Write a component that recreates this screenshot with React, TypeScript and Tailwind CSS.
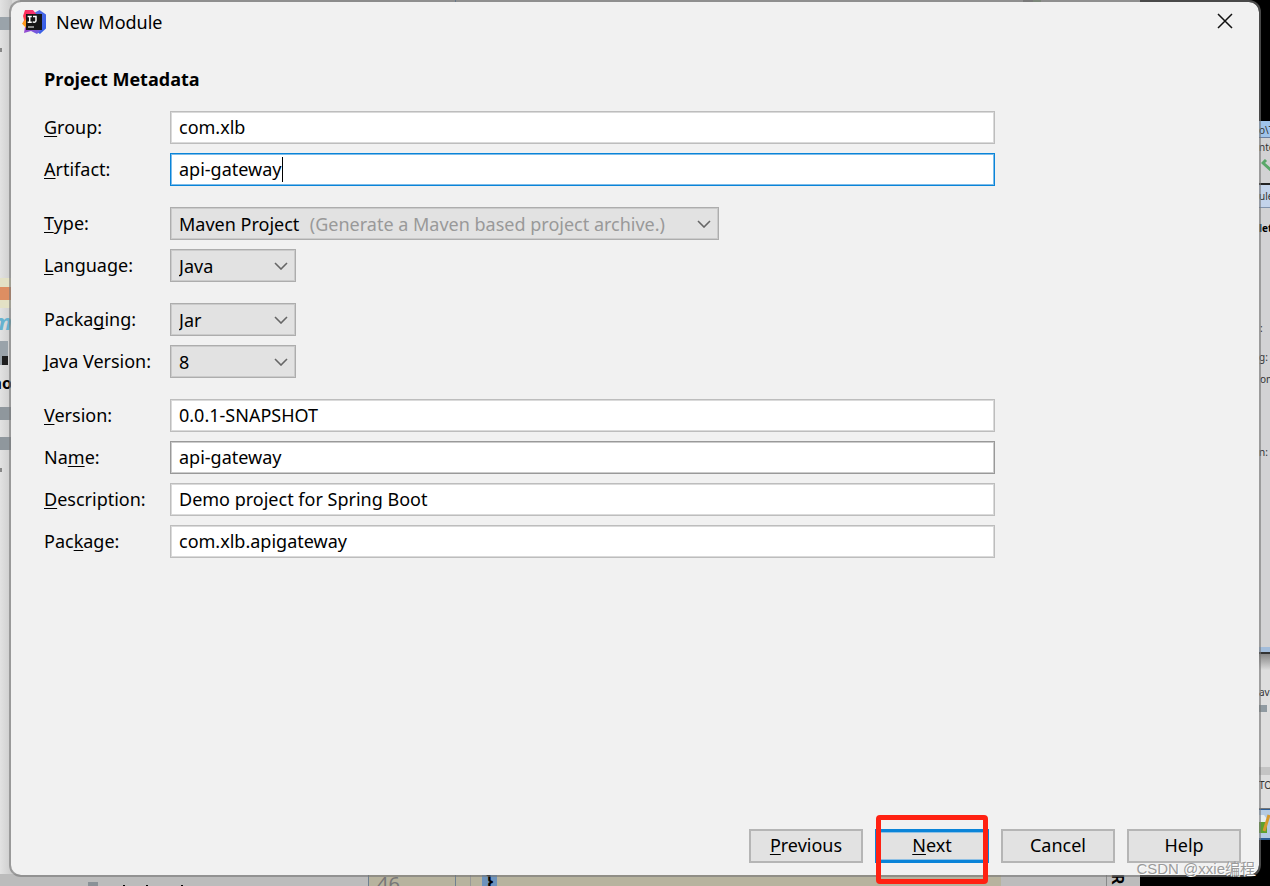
import { ReactNode } from 'react';

const FIELD =
  'block h-[33px] w-full border bg-white px-2 pb-0.5 text-lg text-black outline-none inset-ring';

interface RowProps {
  id: string;
  label: ReactNode;
  children: ReactNode;
}

function Row({ id, label, children }: RowProps) {
  return (
    <div className="flex items-center">
      <label htmlFor={id} className="w-[126px] shrink-0 whitespace-nowrap pb-0.5">
        {label}
      </label>
      {children}
    </div>
  );
}

function Key({ children }: { children: string }) {
  return (
    <span className="underline decoration-1 underline-offset-2 [text-decoration-skip-ink:none]">
      {children}
    </span>
  );
}

interface TextFieldProps {
  id: string;
  label: ReactNode;
  value: string;
  tone?: string;
}

function TextField({ id, label, value, tone = 'border-[#bdbdbd] inset-ring-[#dadada]' }: TextFieldProps) {
  return (
    <Row id={id} label={label}>
      <input id={id} type="text" defaultValue={value} className={`${FIELD} ${tone}`} />
    </Row>
  );
}

interface DropDownProps {
  id: string;
  label: ReactNode;
  options: string[];
  hint?: string;
}

function DropDown({ id, label, options, hint }: DropDownProps) {
  return (
    <Row id={id} label={label}>
      <div className={hint ? 'relative w-[549px]' : 'relative w-[126px]'}>
        <select
          id={id}
          className="block h-[33px] w-full appearance-none border border-[#adadad] bg-[#e2e2e2] px-2 text-lg text-black outline-none inset-ring inset-ring-[#cbcbcb]"
        >
          {options.map((o) => (
            <option key={o}>{o}</option>
          ))}
        </select>
        <span className="pointer-events-none absolute inset-0 flex items-center justify-end gap-8 whitespace-nowrap pr-2 text-[#999999]">
          {hint}
          <svg
            className="h-2 w-3.5"
            viewBox="0 0 14 8"
            fill="none"
            stroke="#666666"
            strokeWidth="1.6"
          >
            <path d="M1 1 7 7 13 1" />
          </svg>
        </span>
      </div>
    </Row>
  );
}

function IdeaLogo() {
  return (
    <svg className="size-6" viewBox="0 0 24 24" aria-hidden="true">
      <defs>
        <linearGradient id="blue" x1="0" y1="0" x2="1" y2="1">
          <stop offset="0" stopColor="#5b6fe0" />
          <stop offset="1" stopColor="#2f5be8" />
        </linearGradient>
        <linearGradient id="pink" x1="0" y1="1" x2="1" y2="0">
          <stop offset="0" stopColor="#ff8a1f" />
          <stop offset=".4" stopColor="#ff2d55" />
          <stop offset="1" stopColor="#f0347c" />
        </linearGradient>
        <linearGradient id="plum" x1="0" y1="0" x2="1" y2="1">
          <stop offset="0" stopColor="#c03ac0" />
          <stop offset="1" stopColor="#5a63e6" />
        </linearGradient>
      </defs>
      <path d="M12 3 17.5 0 24 4.5V18.5L18 24 12 20Z" fill="url(#blue)" />
      <path d="M3 17 2 23 9 21 15 24 20 19V12Z" fill="url(#plum)" />
      <path d="M3 0 11 0 15 5 9 13 4 17 1 13 2 10 1 6Z" fill="url(#pink)" />
      <path d="M0 13.5 4 9V18Z" fill="#ff9a1c" />
      <rect x="4" y="4" width="16" height="16" fill="#161616" />
      <path
        d="M5.6 6.6H9.8M7.7 6.6V12.2M5.6 12.2H9.8M11 6.6H14V10.6Q14 12.3 12.4 12.3 11.3 12.3 10.8 11.6"
        fill="none"
        stroke="#fff"
        strokeWidth="1.5"
      />
      <path d="M6 17H12" stroke="#ddd" strokeWidth="1.2" />
    </svg>
  );
}

// Windows that lie underneath the dialog; only their edges show.
function Desktop() {
  return (
    <div className="absolute inset-0 overflow-hidden bg-[#d9d9d9]" aria-hidden="true">
      <div className="absolute inset-y-0 left-0 flex w-3 flex-col overflow-hidden bg-linear-to-r from-[#e2e2e2] to-[#cccccc]">
        <div className="mt-[17px] h-[13px] bg-[#9aa3aa]" />
        <div className="mt-[18px] h-1 w-0.5 bg-[#888888]" />
        <div className="mt-[226px] bg-[#e3e1c5] pb-2 pt-[9px]">
          <div className="h-[13px] bg-[#dd8e62]" />
        </div>
        <span className="flex justify-end pt-px text-[22px] font-bold italic leading-6 text-[#66b2cf]">m</span>
        <div className="mt-2 flex h-6 w-2 items-end justify-end bg-[#9aa3aa]">
          <div className="h-[9px] w-1.5 bg-[#1f1f1f]" />
        </div>
        <span className="mt-1.5 flex justify-end text-base font-bold leading-6 text-black">no</span>
        <div className="mt-3 h-[13px] bg-[#8f979d]" />
        <div className="mt-[17px] h-[13px] bg-[#8f979d]" />
        <div className="mt-[18px] h-1 w-0.5 bg-[#888888]" />
      </div>

      <div className="absolute left-5 right-[130px] top-0 flex h-1 bg-[#b4b4b4]">
        <div className="ml-[310px] w-[60px] bg-[#a9a9a9]" />
        <div className="ml-[65px] w-px bg-[#4a78a8]" />
        <div className="ml-auto w-[10px] bg-[#7f7f7f]" />
        <div className="mr-[99px] w-2 bg-[#84a07f]" />
      </div>

      <div className="absolute bottom-0 left-0 right-[130px] flex h-3 bg-[#bcbcbc]">
        <div className="flex w-[368px] items-end">
          <div className="ml-[88px] h-1 w-[10px] bg-[#8a9197]" />
          <div className="ml-[25px] h-px w-0.5 bg-black" />
          <div className="ml-[21px] h-px w-0.5 bg-black" />
          <div className="ml-[33px] h-px w-0.5 bg-black" />
        </div>
        <div className="flex flex-1 bg-[#b7b39e]">
          <span className="w-[88px] border-x border-[#6f8090] pl-2 text-xl leading-5 text-[#777777]">46</span>
          <div className="ml-[14px] w-px bg-[#999999]" />
          <span className="ml-[11px] w-[15px] bg-[#6d93bd] text-center text-lg font-bold leading-3 text-black">
            {'}'}
          </span>
        </div>
        <div className="flex w-[139px] justify-end">
          <span className="w-[34px] border-l border-[#888888] pr-3 text-base font-bold leading-5 text-black [writing-mode:vertical-rl]">
            R
          </span>
        </div>
      </div>

      <div className="absolute inset-y-0 right-0 flex w-[130px] items-start justify-end bg-black pt-[121px]">
        <div className="flex h-[719px] w-[11px] flex-col overflow-hidden bg-[#d2d2d4] text-[10px] leading-3 text-[#333333]">
          <span className="h-[17px] border-b border-[#6a7fa0] bg-[#9fc3ea] pt-[3px]">o\T</span>
          <span className="mt-[3px]">nte</span>
          <svg className="ml-0.5 mt-1.5 size-3 shrink-0" viewBox="0 0 12 12">
            <path d="M1 5 5 1M2 4 11 12" stroke="#59a869" strokeWidth="3" />
          </svg>
          <span className="mt-3 h-[25px] border-b border-t-2 border-b-[#8193ac] border-t-[#222222] bg-[#c3d3ea] pt-[5px]">
            ule
          </span>
          <span className="mt-[14px] font-bold text-black">let</span>
          <span className="mt-[88px] pl-px">:</span>
          <span className="mt-[17px]">g:</span>
          <span className="mt-2.5 pl-px">on</span>
          <span className="mt-[61px]">n:</span>
          <div className="mt-[189px] h-[7px] border-b-2 border-[#333333] bg-[#a3bddb]" />
          <div className="h-4 bg-linear-to-b from-[#888888] to-[#dcdcdc]" />
          <div className="flex h-[139px] flex-col border-b border-[#777777] bg-[#dedede]">
            <span className="mt-4">ava</span>
            <div className="mt-[7px] h-[7px] w-2 bg-[#8f9aa1]" />
            <div className="mt-[55px] h-2 bg-[#c4c4c4]" />
            <span className="mt-1">TO</span>
          </div>
          <div className="mt-auto flex h-[31px] items-center border-b-2 border-t border-[#2e5e96] bg-[#b5cbe2]">
            <svg className="h-6 w-[11px]" viewBox="0 0 11 24">
              <path d="M0 3H5L8 7V21H0Z" fill="#e8eef0" />
              <path d="M0 10H8V21H0Z" fill="#5da02f" />
              <path d="M5 19 10 3" stroke="#d59a2c" strokeWidth="3" />
            </svg>
          </div>
        </div>
      </div>
    </div>
  );
}

const BUTTON =
  'h-[34px] w-[114px] border-2 border-[#b5b5b5] bg-[#e2e2e2] pb-0.5 text-lg leading-none text-black';

export default function App() {
  return (
    <main className="relative flex min-h-screen flex-col font-['Noto_Sans','Noto_Sans_CJK_SC',sans-serif] text-lg leading-6 text-black">
      <Desktop />

      <section
        role="dialog"
        aria-labelledby="title"
        className="relative mx-[9px] mb-[9px] flex flex-1 flex-col rounded-[12px] border-2 border-[#7777779c] bg-[#f1f1f1] bg-clip-padding"
      >
        <header className="flex h-10 items-center pl-[11px] pr-[25px]">
          <IdeaLogo />
          <h1 id="title" className="ml-2.5 flex-1">
            New Module
          </h1>
          <button type="button" aria-label="Close" className="px-px pb-0.5">
            <svg className="size-4" viewBox="0 0 16 16" stroke="#111" strokeWidth="1.5">
              <path d="M1 1 15 15M15 1 1 15" />
            </svg>
          </button>
        </header>

        <form
          className="flex flex-1 flex-col pb-3 pl-[33px] pr-[18px] pt-[25px]"
          onSubmit={(e) => e.preventDefault()}
        >
          <h2 className="font-['Open_Sans','Noto_Sans',sans-serif] font-bold">Project Metadata</h2>

          <div className="mr-[246px] mt-5 flex flex-col gap-[21px]">
            <div className="flex flex-col gap-[9px]">
              <TextField id="group" label={<><Key>G</Key>roup:</>} value="com.xlb" />
              <Row id="artifact" label={<><Key>A</Key>rtifact:</>}>
                <div className="relative w-full">
                  <input
                    id="artifact"
                    type="text"
                    defaultValue="api-gateway"
                    className={`${FIELD} border-[#0a84d8] inset-ring-[#7dbce9]`}
                  />
                  {/* caret sits right after the value */}
                  <span className="pointer-events-none absolute inset-y-1 left-[9px] flex">
                    <span className="invisible">api-gateway</span>
                    <span className="w-px bg-black" />
                  </span>
                </div>
              </Row>
            </div>

            <div className="flex flex-col gap-[9px]">
              <DropDown
                id="type"
                label={<><Key>T</Key>ype:</>}
                options={['Maven Project', 'Gradle Project']}
                hint="(Generate a Maven based project archive.)"
              />
              <DropDown id="language" label={<><Key>L</Key>anguage:</>} options={['Java', 'Kotlin', 'Groovy']} />
            </div>

            <div className="flex flex-col gap-[9px]">
              <DropDown id="packaging" label={<>Packa<Key>g</Key>ing:</>} options={['Jar', 'War']} />
              <DropDown id="java" label={<><Key>J</Key>ava Version:</>} options={['8', '11', '17']} />
            </div>

            <div className="flex flex-col gap-[9px]">
              <TextField id="version" label={<><Key>V</Key>ersion:</>} value="0.0.1-SNAPSHOT" />
              <TextField
                id="name"
                label={<>Na<Key>m</Key>e:</>}
                value="api-gateway"
                tone="border-[#999999] inset-ring-[#cccccc]"
              />
              <TextField id="description" label={<><Key>D</Key>escription:</>} value="Demo project for Spring Boot" />
              <TextField id="package" label={<>Pac<Key>k</Key>age:</>} value="com.xlb.apigateway" />
            </div>
          </div>

          <div className="mt-auto flex justify-end gap-3">
            <button type="button" className={BUTTON}>
              <Key>P</Key>revious
            </button>
            <div className="relative">
              <button
                type="submit"
                className="h-[34px] w-[114px] border-3 border-[#0a84d8] bg-[#e2e2e2] pb-0.5 text-lg leading-none text-black inset-ring inset-ring-[#8fc0e4]"
              >
                <Key>N</Key>ext
              </button>
              <div className="pointer-events-none absolute -bottom-[21px] -top-3.5 left-px right-px rounded-[4px] border-5 border-[#ff2112]" />
            </div>
            <button type="button" className={BUTTON}>
              Cancel
            </button>
            <button type="button" className={BUTTON}>
              Help
            </button>
          </div>
        </form>
      </section>

      <span className="absolute bottom-[7px] right-[15px] whitespace-nowrap font-['Liberation_Sans','Noto_Sans_CJK_SC',sans-serif] text-[15px] leading-5 text-[#9b9b9b] text-shadow-[1px_1px_0_#ffffff]">
        CSDN @xxie编程
      </span>
    </main>
  );
}
